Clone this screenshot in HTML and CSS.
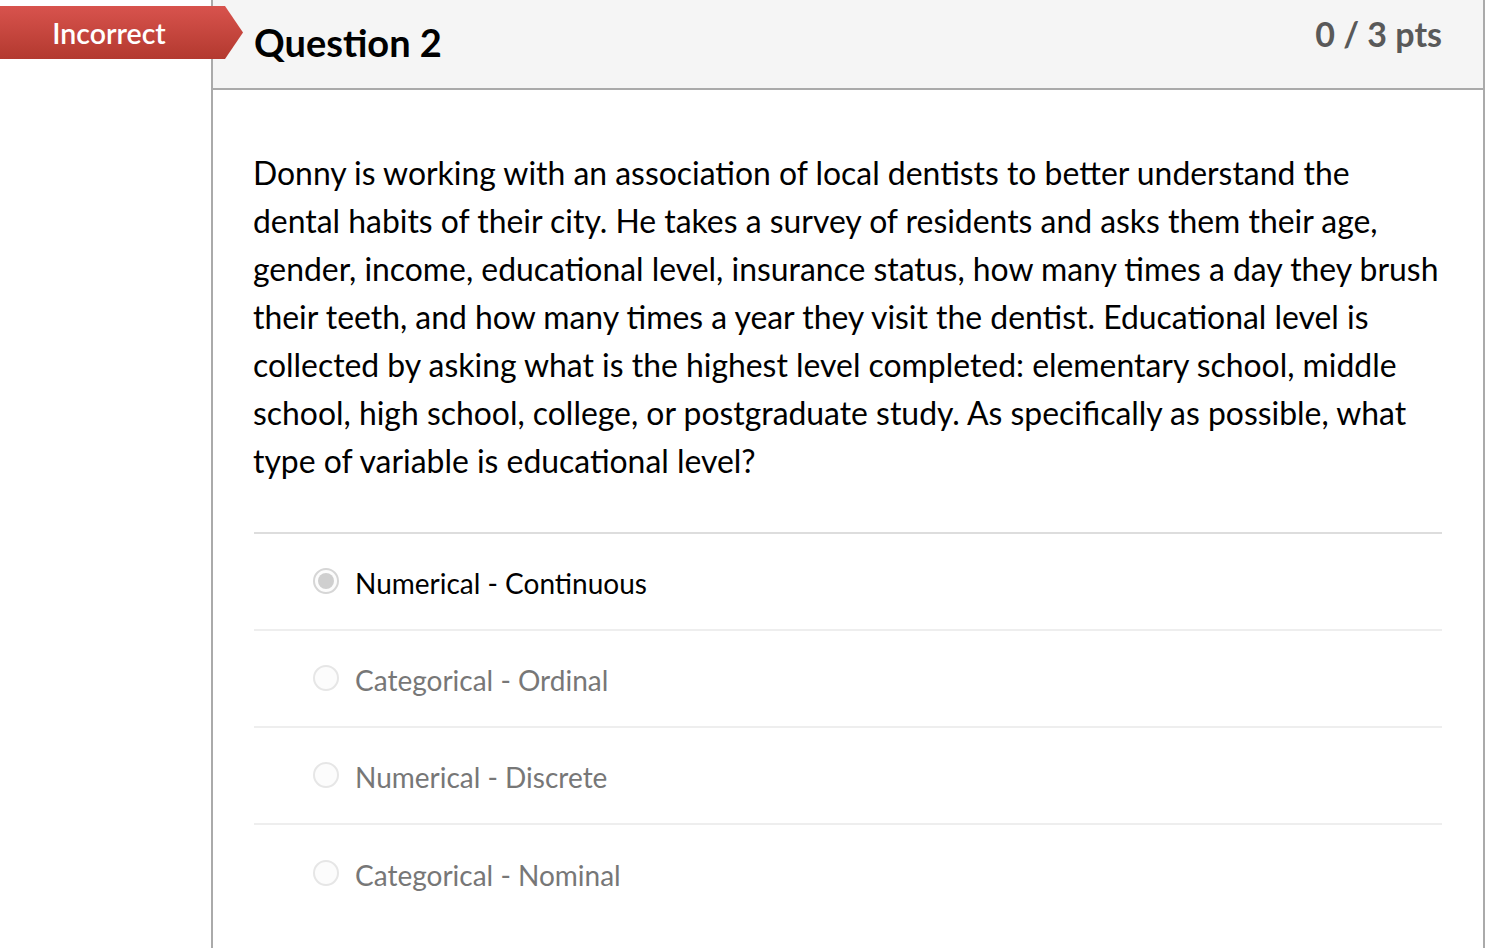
FILE: index.html
```html
<!DOCTYPE html>
<html>
<head>
<meta charset="utf-8">
<link rel="stylesheet" href="styles.css">
</head>
<body>
<div class="page">
  <div class="side"></div>
  <div class="question">
    <div class="banner"><span class="banner-text">Incorrect</span></div>
    <div class="q-header">
      <h2 class="q-title">Question 2</h2>
      <div class="q-pts">0 / 3 pts</div>
    </div>
    <div class="q-body">
      <p class="q-text">Donny is working with an association of local dentists to better understand the dental habits of their city. He takes a survey of residents and asks them their age, gender, income, educational level, insurance status, how many times a day they brush their teeth, and how many times a year they visit the dentist. Educational level is collected by asking what is the highest level completed: elementary school, middle school, high school, college, or postgraduate study. As specifically as possible, what type of variable is educational level?</p>
      <div class="answers">
        <div class="answer selected"><span class="radio checked"></span><span class="a-label">Numerical - Continuous</span></div>
        <div class="answer"><span class="radio"></span><span class="a-label">Categorical - Ordinal</span></div>
        <div class="answer"><span class="radio"></span><span class="a-label">Numerical - Discrete</span></div>
        <div class="answer"><span class="radio"></span><span class="a-label">Categorical - Nominal</span></div>
      </div>
    </div>
  </div>
</div>
</body>
</html>
```

FILE: styles.css
```css
html, body {
  margin: 0;
  padding: 0;
  background: #fff;
}
body {
  font-family: Lato, "Noto Sans", sans-serif;
  color: #000;
}
.page {
  display: flex;
  min-height: 948px;
}
.side {
  width: 211px;
  flex: none;
}
.question {
  position: relative;
  width: 1270px;
  border-left: 2px solid #aaa;
  border-right: 2px solid #aaa;
}
.banner {
  position: absolute;
  left: -213px;
  top: 6px;
  width: 243px;
  height: 53px;
  background: linear-gradient(#d8534d, #b3392f);
  clip-path: polygon(0 0, 225px 0, 243px 50%, 225px 100%, 0 100%);
  display: flex;
  align-items: center;
}
.banner-text {
  width: 218px;
  text-align: center;
  color: #fff;
  font-size: 28.5px;
  font-weight: 600;
  line-height: 1;
  margin-top: 1px;
}
.q-header {
  height: 88px;
  background: #f5f5f5;
  border-bottom: 2px solid #aaa;
  display: flex;
  justify-content: space-between;
  align-items: flex-start;
  padding: 0 41px 0 41px;
}
.q-title {
  margin: 19px 0 0;
  font-size: 38px;
  font-weight: 700;
  line-height: 46px;
}
.q-pts {
  margin-top: 14px;
  font-size: 34px;
  font-weight: 700;
  color: #595959;
  line-height: 40px;
}
.q-body {
  padding: 59px 39px 0 40px;
}
.q-text {
  margin: 0 0 47px;
  font-size: 31.9px;
  line-height: 48px;
}
.answers {
  border-top: 2px solid #ddd;
  margin-left: 1px;
  margin-right: 2px;
}
.answer {
  height: 97px;
  box-sizing: border-box;
  padding-top: 3px;
  border-bottom: 2px solid #eee;
  display: flex;
  align-items: center;
  padding-left: 59px;
  color: #777;
}
.answer:last-child {
  border-bottom: none;
}
.answer.selected {
  color: #000;
}
.radio {
  width: 22px;
  height: 22px;
  border: 2px solid #e6e6e6;
  border-radius: 50%;
  background: #fcfcfc;
  flex: none;
  margin-right: 16px;
  margin-top: -4px;
  position: relative;
}
.radio.checked {
  border-color: #d6d6d6;
}
.radio.checked::after {
  content: "";
  position: absolute;
  left: 3px;
  top: 3px;
  width: 16px;
  height: 16px;
  border-radius: 50%;
  background: #cfcfcf;
}
.a-label {
  font-size: 28px;
  line-height: 36px;
}
```
